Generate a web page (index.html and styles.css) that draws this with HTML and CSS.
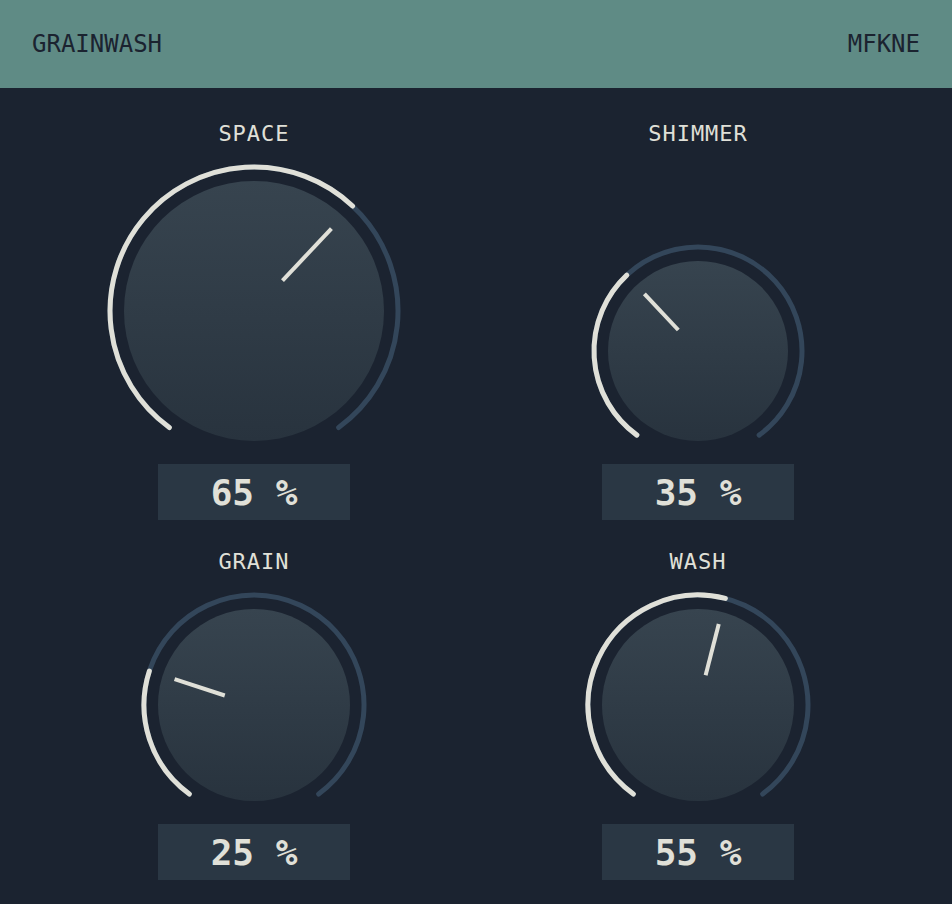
FILE: index.html
```html
<!DOCTYPE html>
<html lang="en">
<head>
<meta charset="utf-8">
<title>GRAINWASH</title>
<link rel="stylesheet" href="styles.css">
</head>
<body>
<header class="topbar">
  <span class="brand">GRAINWASH</span>
  <span class="maker">MFKNE</span>
</header>
<main class="panel">
  <section class="control">
    <div class="label">SPACE</div>
    <div class="knob-wrap">
      <svg class="knob" width="260" height="260" viewBox="0 0 260 260">
        <defs>
          <linearGradient id="g1" x1="0" y1="0" x2="0" y2="1">
            <stop offset="0" stop-color="#37444f"/>
            <stop offset="1" stop-color="#28333e"/>
          </linearGradient>
        </defs>
        <path class="track" d="M45.36 246.50 A144 144 0 1 1 214.64 246.50"/>
        <path class="lit" d="M45.36 246.50 A144 144 0 1 1 228.57 25.02"/>
        <circle cx="130" cy="130" r="130" fill="url(#g1)"/>
        <line class="pointer" x1="158.48" y1="99.67" x2="207.42" y2="47.55"/>
      </svg>
    </div>
    <div class="value">65 %</div>
  </section>
  <section class="control">
    <div class="label">SHIMMER</div>
    <div class="knob-wrap">
      <svg class="knob" width="180" height="180" viewBox="0 0 180 180">
        <defs>
          <linearGradient id="g2" x1="0" y1="0" x2="0" y2="1">
            <stop offset="0" stop-color="#37444f"/>
            <stop offset="1" stop-color="#28333e"/>
          </linearGradient>
        </defs>
        <path class="track" d="M28.87 174.14 A104 104 0 1 1 151.13 174.14"/>
        <path class="lit" d="M28.87 174.14 A104 104 0 0 1 18.81 14.18"/>
        <circle cx="90" cy="90" r="90" fill="url(#g2)"/>
        <line class="pointer" x1="70.29" y1="69.00" x2="36.40" y2="32.92"/>
      </svg>
    </div>
    <div class="value">35 %</div>
  </section>
  <section class="control">
    <div class="label">GRAIN</div>
    <div class="knob-wrap">
      <svg class="knob" width="192" height="192" viewBox="0 0 192 192">
        <defs>
          <linearGradient id="g3" x1="0" y1="0" x2="0" y2="1">
            <stop offset="0" stop-color="#37444f"/>
            <stop offset="1" stop-color="#28333e"/>
          </linearGradient>
        </defs>
        <path class="track" d="M31.34 184.99 A110 110 0 1 1 160.66 184.99"/>
        <path class="lit" d="M31.34 184.99 A110 110 0 0 1 -8.62 62.01"/>
        <circle cx="96" cy="96" r="96" fill="url(#g3)"/>
        <line class="pointer" x1="66.78" y1="86.51" x2="16.57" y2="70.19"/>
      </svg>
    </div>
    <div class="value">25 %</div>
  </section>
  <section class="control">
    <div class="label">WASH</div>
    <div class="knob-wrap">
      <svg class="knob" width="192" height="192" viewBox="0 0 192 192">
        <defs>
          <linearGradient id="g4" x1="0" y1="0" x2="0" y2="1">
            <stop offset="0" stop-color="#37444f"/>
            <stop offset="1" stop-color="#28333e"/>
          </linearGradient>
        </defs>
        <path class="track" d="M31.34 184.99 A110 110 0 1 1 160.66 184.99"/>
        <path class="lit" d="M31.34 184.99 A110 110 0 0 1 123.36 -10.55"/>
        <circle cx="96" cy="96" r="96" fill="url(#g4)"/>
        <line class="pointer" x1="103.64" y1="66.24" x2="116.77" y2="15.10"/>
      </svg>
    </div>
    <div class="value">55 %</div>
  </section>
</main>
</body>
</html>
```

FILE: styles.css
```css
html {
  overflow: hidden;
}

body {
  margin: 0;
  background: #1b2330;
  font-family: "DejaVu Sans Mono", "Liberation Mono", monospace;
  color: #e0e0d8;
}

.topbar {
  height: 88px;
  box-sizing: border-box;
  padding: 0 32px;
  display: flex;
  align-items: center;
  justify-content: space-between;
  background: #5f8b85;
  color: #1b2330;
  font-size: 24px;
}

.panel {
  padding: 32px 32px 24px;
  display: grid;
  grid-template-columns: 1fr 1fr;
  row-gap: 28px;
}

.control {
  display: flex;
  flex-direction: column;
  align-items: center;
}

.label {
  font-size: 22px;
  line-height: 28px;
  letter-spacing: 1px;
  color: #e0e0d8;
}

.knob-wrap {
  flex: 1;
  display: flex;
  align-items: flex-end;
  justify-content: center;
  padding-top: 33px;
}

.knob {
  display: block;
  overflow: visible;
}

.track {
  fill: none;
  stroke: #33465a;
  stroke-width: 5;
  stroke-linecap: round;
}

.lit {
  fill: none;
  stroke: #e0e0d8;
  stroke-width: 5;
  stroke-linecap: round;
}

.pointer {
  stroke: #e0e0d8;
  stroke-width: 4;
  stroke-linecap: butt;
}

.value {
  margin-top: 23px;
  width: 192px;
  height: 56px;
  display: flex;
  align-items: center;
  justify-content: center;
  background: #2a3744;
  font-size: 36px;
  font-weight: bold;
  color: #e0e0d8;
}
```
